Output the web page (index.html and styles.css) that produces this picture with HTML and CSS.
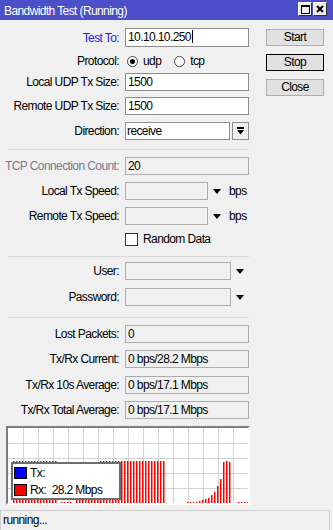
FILE: index.html
```html
<!DOCTYPE html>
<html>
<head>
<meta charset="utf-8">
<title>Bandwidth Test (Running)</title>
<link rel="stylesheet" href="styles.css">
</head>
<body>
<div class="window">
  <div class="titlebar">
    <span class="title">Bandwidth Test (Running)</span>
    <div class="tbtns">
      <span class="tbtn"><svg width="9" height="9" viewBox="0 0 9 9"><rect x="0.5" y="0.5" width="8" height="8" fill="none" stroke="#000"/><rect x="0" y="0" width="9" height="2" fill="#000"/></svg></span>
      <span class="tbtn"><svg width="8" height="8" viewBox="0 0 8 8"><path d="M1 1L7 7M7 1L1 7" stroke="#000" stroke-width="2"/></svg></span>
    </div>
  </div>
  <div class="main">
    <div class="form">
      <div class="row h19 mt8"><span class="lbl blue">Test To:</span><div class="field w-full h19">10.10.10.250<span class="caret"></span></div></div>
      <div class="row mt5"><span class="lbl">Protocol:</span><span class="radio on"></span><span class="opt">udp</span><span class="radio second"></span><span class="opt">tcp</span></div>
      <div class="row mt3"><span class="lbl">Local UDP Tx Size:</span><div class="field w-full">1500</div></div>
      <div class="row mt6"><span class="lbl">Remote UDP Tx Size:</span><div class="field w-full">1500</div></div>
      <div class="row mt7"><span class="lbl">Direction:</span><div class="field w-dir">receive</div><span class="ddbtn"><svg width="7" height="8" viewBox="0 0 7 8"><rect x="0" y="0" width="7" height="2" fill="#000"/><polygon points="0,3 7,3 3.5,7.5" fill="#000"/></svg></span></div>
      <div class="sep mt9"></div>
      <div class="row mt7"><span class="lbl dim">TCP Connection Count:</span><div class="field ro w-full">20</div></div>
      <div class="row mt7"><span class="lbl">Local Tx Speed:</span><div class="field ro w-speed"></div><span class="arrow"></span><span class="bps">bps</span></div>
      <div class="row mt7"><span class="lbl">Remote Tx Speed:</span><div class="field ro w-speed"></div><span class="arrow"></span><span class="bps">bps</span></div>
      <div class="row mt5"><span class="lbl"></span><span class="check"></span><span class="opt">Random Data</span></div>
      <div class="sep mt8"></div>
      <div class="row mt5"><span class="lbl">User:</span><div class="field ro w-user"></div><span class="arrow"></span></div>
      <div class="row mt8"><span class="lbl">Password:</span><div class="field ro w-user"></div><span class="arrow"></span></div>
      <div class="sep mt11"></div>
      <div class="row mt7"><span class="lbl">Lost Packets:</span><div class="field ro w-full">0</div></div>
      <div class="row mt7"><span class="lbl">Tx/Rx Current:</span><div class="field ro w-full">0 bps/28.2 Mbps</div></div>
      <div class="row mt8"><span class="lbl">Tx/Rx 10s Average:</span><div class="field ro w-full">0 bps/17.1 Mbps</div></div>
      <div class="row mt7"><span class="lbl">Tx/Rx Total Average:</span><div class="field ro w-full">0 bps/17.1 Mbps</div></div>
      <div class="chart mt7">
        <svg class="plot" width="240" height="75" viewBox="0 0 240 75">
          <defs>
            <pattern id="bars" x="2" y="0" width="3" height="75" patternUnits="userSpaceOnUse">
              <rect x="0" y="0" width="1.5" height="75" fill="#ff0000"/>
            </pattern>
          </defs>
          <g fill="#d2d2d2">
            <rect x="15" y="0" width="1" height="75"/><rect x="30" y="0" width="1" height="75"/><rect x="45" y="0" width="1" height="75"/>
            <rect x="60" y="0" width="1" height="75"/><rect x="75" y="0" width="1" height="75"/><rect x="90" y="0" width="1" height="75"/>
            <rect x="105" y="0" width="1" height="75"/><rect x="120" y="0" width="1" height="75"/><rect x="135" y="0" width="1" height="75"/>
            <rect x="150" y="0" width="1" height="75"/><rect x="165" y="0" width="1" height="75"/><rect x="180" y="0" width="1" height="75"/>
            <rect x="195" y="0" width="1" height="75"/><rect x="210" y="0" width="1" height="75"/><rect x="225" y="0" width="1" height="75"/>
            <rect x="0" y="15" width="240" height="1"/><rect x="0" y="30" width="240" height="1"/>
            <rect x="0" y="45" width="240" height="1"/><rect x="0" y="60" width="240" height="1"/>
          </g>
          <rect x="5" y="33" width="45" height="42" fill="url(#bars)"/>
          <rect x="53" y="74" width="12" height="1" fill="url(#bars)"/>
          <rect x="68" y="45" width="24" height="30" fill="url(#bars)"/>
          <rect x="92" y="33" width="66" height="42" fill="url(#bars)"/>
          <rect x="179" y="74" width="12" height="1" fill="url(#bars)"/>
          <g fill="#ff0000">
            <rect x="191" y="73" width="1.5" height="2"/><rect x="194" y="72" width="1.5" height="3"/>
            <rect x="197" y="71" width="1.5" height="4"/><rect x="200" y="70" width="1.5" height="5"/>
            <rect x="203" y="67" width="1.5" height="8"/><rect x="206" y="64" width="1.5" height="11"/>
            <rect x="209" y="58" width="1.5" height="17"/><rect x="212" y="51" width="1.5" height="24"/>
            <rect x="215" y="34" width="1.5" height="41"/><rect x="218" y="33" width="1.5" height="42"/>
            <rect x="221" y="34" width="1.5" height="41"/>
          </g>
          <rect x="230" y="74" width="12" height="1" fill="url(#bars)"/>
        </svg>
        <div class="legend">
          <div class="leg-item"><span class="sw tx"></span><span>Tx:</span></div>
          <div class="leg-item"><span class="sw rx"></span><span class="pre">Rx:  28.2 Mbps</span></div>
        </div>
      </div>
    </div>
    <div class="buttons">
      <div class="btn first">Start</div>
      <div class="btn focus">Stop</div>
      <div class="btn">Close</div>
    </div>
  </div>
  <div class="status">running...</div>
</div>
</body>
</html>
```
FILE: styles.css
```css
body {
  margin: 0;
  background: #f0f0f0;
  font-family: "Liberation Sans", Arial, sans-serif;
  font-size: 12px;
  letter-spacing: -0.6px;
  color: #000;
}
.window {
  width: 333px;
  height: 530px;
  display: flex;
  flex-direction: column;
  overflow: hidden;
}
.titlebar {
  height: 20px;
  flex: none;
  background: #4b50c9;
  display: flex;
  box-sizing: border-box;
}
.title {
  color: #fff;
  padding: 3px 0 0 4px;
  line-height: 17px;
  white-space: nowrap;
}
.tbtns {
  display: flex;
  gap: 1px;
  margin: 2px 6px 0 auto;
}
.tbtn {
  width: 14px;
  height: 14px;
  box-sizing: border-box;
  background: #ececec;
  border: 1px solid;
  border-color: #ffffff #303030 #303030 #ffffff;
  display: flex;
  align-items: center;
  justify-content: center;
}
.tbtn svg { display: block; }
.main {
  flex: 1;
  display: flex;
}
.form {
  width: 250px;
  flex: none;
  display: flex;
  flex-direction: column;
}
.row {
  display: flex;
  align-items: center;
  height: 18px;
  flex: none;
}
.h19 { height: 19px; }
.mt3 { margin-top: 3px; }
.mt5 { margin-top: 5px; }
.mt6 { margin-top: 6px; }
.mt7 { margin-top: 7px; }
.mt8 { margin-top: 8px; }
.mt9 { margin-top: 9px; }
.mt11 { margin-top: 11px; }
.lbl {
  width: 119px;
  margin-right: 6px;
  text-align: right;
  white-space: nowrap;
  flex: none;
}
.lbl.blue { color: #1c1ce6; }
.lbl.dim { color: #7a7a8a; }
.field {
  box-sizing: border-box;
  height: 18px;
  border: 1px solid #8c8c8c;
  background: #fff;
  padding: 0 2px;
  line-height: 16px;
  white-space: nowrap;
  overflow: hidden;
  flex: none;
}
.field.h19 { height: 19px; line-height: 17px; }
.field.ro {
  background: #f0f0f0;
  border-color: #adadad;
}
.w-full { width: 124px; }
.w-dir { width: 105px; padding-left: 1px; }
.w-speed { width: 83px; }
.w-user { width: 106px; }
.caret {
  display: inline-block;
  width: 1px;
  height: 13px;
  background: #000;
  vertical-align: -2px;
  margin-left: 1px;
}
.radio {
  width: 11px;
  height: 11px;
  box-sizing: border-box;
  border-radius: 50%;
  border: 1px solid #444;
  background: #fff;
  margin-left: 2px;
  position: relative;
  flex: none;
}
.radio.on::after {
  content: "";
  position: absolute;
  left: 2px;
  top: 2px;
  width: 5px;
  height: 5px;
  border-radius: 50%;
  background: #000;
}
.radio.second { margin-left: 13px; }
.opt { margin-left: 5px; white-space: nowrap; }
.check {
  width: 13px;
  height: 13px;
  box-sizing: border-box;
  border: 1px solid #333;
  background: #fff;
  flex: none;
}
.check + .opt { margin-left: 5px; }
.ddbtn {
  width: 17px;
  height: 18px;
  box-sizing: border-box;
  border: 1px solid #8c8c8c;
  background: #f0f0f0;
  margin-left: 2px;
  display: flex;
  align-items: center;
  justify-content: center;
  flex: none;
}
.ddbtn svg { display: block; }
.arrow {
  width: 0;
  height: 0;
  border-left: 4px solid transparent;
  border-right: 4px solid transparent;
  border-top: 5px solid #000;
  margin-left: 5px;
  flex: none;
}
.bps { margin-left: 8px; }
.sep {
  height: 1px;
  width: 241px;
  margin-left: 8px;
  background: #d9d9d9;
  flex: none;
}
.chart {
  position: relative;
  width: 244px;
  height: 79px;
  margin-left: 6px;
  box-sizing: border-box;
  border: 2px solid;
  border-color: #7d7d7d #ffffff #ffffff #7d7d7d;
  background: #fff;
  flex: none;
}
.plot { display: block; }
.legend {
  position: absolute;
  left: 3px;
  top: 34px;
  width: 110px;
  height: 38px;
  box-sizing: border-box;
  border: 2px solid #6e6e6e;
  background: #fff;
}
.leg-item {
  display: flex;
  align-items: center;
  height: 17px;
}
.sw {
  width: 13px;
  height: 12px;
  box-sizing: border-box;
  border: 1px solid #000;
  margin-left: 1px;
  margin-right: 3px;
  flex: none;
}
.sw.tx { background: #0000ff; }
.sw.rx { background: #ff0000; }
.pre { white-space: pre; }
.buttons {
  margin-left: 16px;
  display: flex;
  flex-direction: column;
}
.btn {
  width: 58px;
  height: 17px;
  box-sizing: border-box;
  border: 1px solid #adadad;
  background: #e1e1e1;
  text-align: center;
  line-height: 15px;
  margin-top: 8px;
}
.btn.first { margin-top: 9px; }
.btn.focus { border-color: #000; }
.status {
  height: 20px;
  width: 330px;
  flex: none;
  box-sizing: border-box;
  border: 1px solid #cfcfcf;
  border-bottom: none;
  padding-left: 2px;
  line-height: 19px;
}
```
